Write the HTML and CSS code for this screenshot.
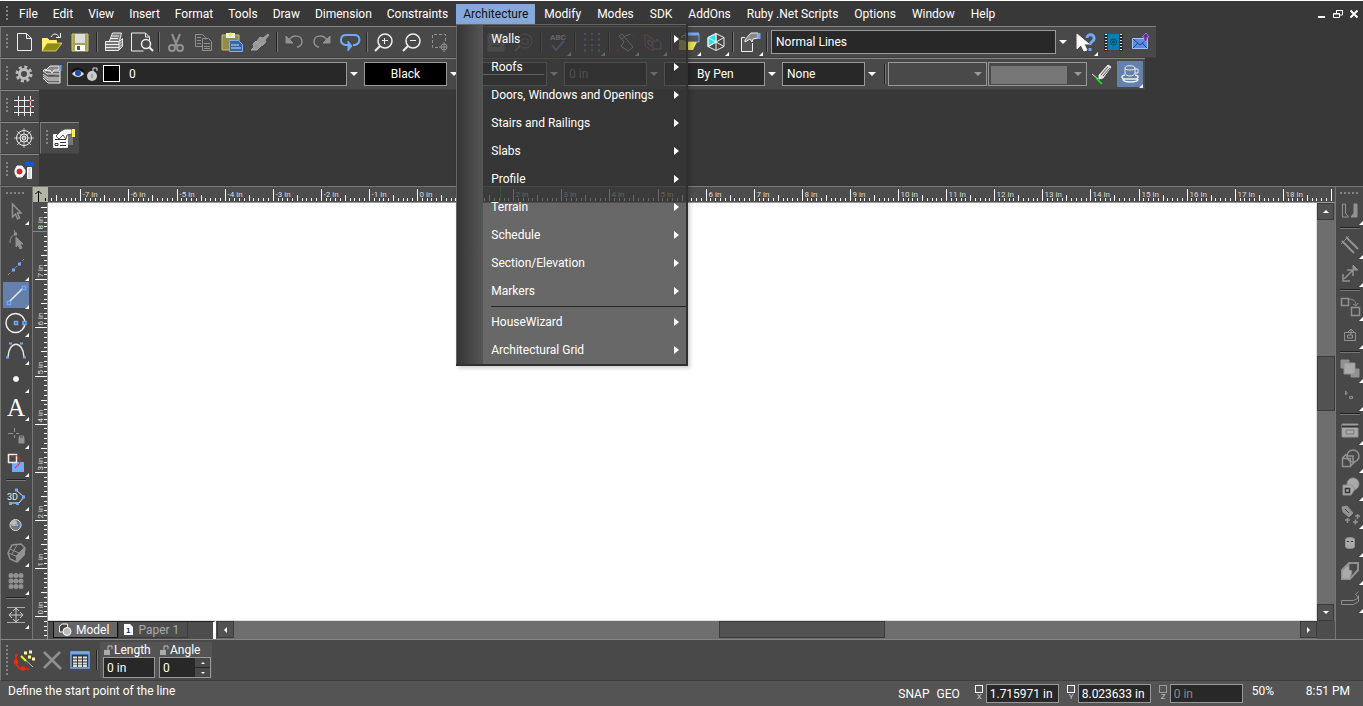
FILE: index.html
```
<!DOCTYPE html>
<html lang="en">
<head>
    <meta charset="UTF-8">
    <meta name="viewport" content="width=device-width, initial-scale=1.0">
    <title>CAD Drawing - Model</title>
    <link rel="stylesheet" href="styles.css">
</head>
<body>

    <!-- Menu bar -->
    <header class="menubar">
        <span class="grip"></span>
        <nav class="menus">
            <button>File</button>
            <button>Edit</button>
            <button>View</button>
            <button>Insert</button>
            <button>Format</button>
            <button>Tools</button>
            <button>Draw</button>
            <button>Dimension</button>
            <button>Constraints</button>
            <div class="menu-open">
                <button class="current" aria-expanded="true">Architecture</button>
                <div class="dropdown">
                    <button>Walls</button>
                    <button>Roofs</button>
                    <button>Doors, Windows and Openings</button>
                    <button>Stairs and Railings</button>
                    <button>Slabs</button>
                    <button>Profile</button>
                    <button>Terrain</button>
                    <button>Schedule</button>
                    <button>Section/Elevation</button>
                    <button>Markers</button>
                    <hr>
                    <button>HouseWizard</button>
                    <button>Architectural Grid</button>
                </div>
            </div>
            <button>Modify</button>
            <button>Modes</button>
            <button>SDK</button>
            <button>AddOns</button>
            <button>Ruby .Net Scripts</button>
            <button>Options</button>
            <button>Window</button>
            <button>Help</button>
        </nav>
        <div class="window-buttons">
            <button aria-label="Minimize"><svg width="10" height="10"><path d="M1 8h7" stroke="#fff" stroke-width="2"/></svg></button>
            <button aria-label="Restore"><svg width="10" height="10" fill="none" stroke="#fff"><path d="M3.500 4V1.500h6v4.500H7M3 1.500h7"/><path d="M.5 4.500h6v4h-6zM0 5h7"/></svg></button>
            <button aria-label="Close"><svg width="10" height="10"><path d="M1.500 1.500l7 7M8.500 1.500l-7 7" stroke="#fff" stroke-width="2"/></svg></button>
        </div>
    </header>

    <!-- Standard toolbar -->
    <div class="toolbar">
        <span class="grip"></span>
        <button class="tool" aria-label="New"><svg class="icon"><path d="M7.500 5.500h9l5 5v12h-14z"/><path d="M16.500 5.500v5h5"/></svg></button>
        <button class="tool" aria-label="Open"><svg class="icon"><path d="M4.500 22V10.500h5l2 2h7V15" fill="#ffee70" stroke="#ffee70"/><path d="M4 23l5-8h15l-6 8z" fill="#8c8c16" stroke="#f4ee70" stroke-width=".7"/><path d="M13 9c2-4 6-4 8 0M22.500 5v4.500H18"/></svg></button>
        <button class="tool" aria-label="Save"><svg class="icon"><path d="M6 6h16v17H6z" fill="#a5a355" stroke="#c9c877"/><path d="M9 6h10v9H9z" fill="#ddd" stroke="none"/><path d="M9 17h10v6H9z" fill="#fff" stroke="none"/><path d="M11 18h3v4h-3z" fill="#555" stroke="none"/></svg></button>
        <span class="sep"></span>
        <button class="tool" aria-label="Print"><svg class="icon"><path d="M9.500 13l3-8h9l-2 8M5.500 13.500h14l3-3v8l-4 4h-13z" fill="#777"/><path d="M12 8h7M11 10.500h7M6 16.500h13l3-3M6 19.500h13l3-3M19 14v8"/></svg></button>
        <button class="tool" aria-label="Print preview"><svg class="icon"><path d="M21.500 12v-3l-4-4h-14v18h12M17.500 5v4h4"/><circle cx="18" cy="16" r="4.500" stroke-width="1.500"/><path d="M21 19l4 4" stroke-width="2"/></svg></button>
        <span class="sep"></span>
        <button class="tool" aria-label="Cut"><svg class="icon dim"><path d="M10 6l5 12M18 6l-5 12" stroke-width="2"/><circle cx="10" cy="20" r="3" stroke-width="2"/><circle cx="18" cy="20" r="3" stroke-width="2"/></svg></button>
        <button class="tool" aria-label="Copy"><svg class="icon dim"><path d="M12 18.500H5.500v-12h7l3 3v2M7 9.500h4M7 12.500h4M7 15.500h4"/><path d="M12.500 10.500h6l3 3v9h-9zM14 15.500h6M14 18.500h6M14 20.500h6"/></svg></button>
        <button class="tool" aria-label="Paste"><svg class="icon"><path d="M4 7h17v15H4z" fill="#8f8c4c" stroke="#c8bd63"/><path d="M8 5h9v5H8z" fill="#eee" stroke="none"/><circle cx="12.500" cy="6.500" r="2" fill="#ee3" stroke="none"/><path d="M11.500 12.500h9l4 4v7h-13z" fill="#3b669f" stroke="#78adff"/><path d="M13 17h8M13 20h10" stroke="#bcdcff"/></svg></button>
        <button class="tool" aria-label="Format painter"><svg class="icon"><path d="M22 6l1 1-4 5 1 2-4 4-5-5 3-4 3 1z" fill="#999" stroke="#999"/><path d="M10 13l5 5-4 4H5l3-3-1-3z" fill="#999" stroke="#aaa"/></svg></button>
        <span class="sep"></span>
        <button class="tool" aria-label="Undo"><svg class="icon dim"><path d="M6 8v7h7z" fill="#919191"/><path d="M9 12c4-6 13-5 13 2 0 3-3 5-5 5" stroke-width="1.500"/></svg></button>
        <button class="tool" aria-label="Redo"><svg class="icon dim"><path d="M22 8v7h-7z" fill="#919191"/><path d="M19 12C15 6 6 7 6 14c0 3 3 5 5 5" stroke-width="1.500"/></svg></button>
        <button class="tool" aria-label="Repeat"><svg class="icon blue"><path d="M12 17H9c-6-2-5-10 1-10h8c7 0 7 8 1 10h-2" stroke-width="2"/><path d="M12 13l4 5-4 5z" fill="#72a8f8"/></svg></button>
        <span class="sep"></span>
        <button class="tool" aria-label="Zoom in"><svg class="icon"><circle cx="15" cy="13" r="7" stroke-width="1.500"/><path d="M10 18l-5 5" stroke-width="2"/><path d="M12 12.500h6M14.500 10v6"/></svg></button>
        <button class="tool" aria-label="Zoom out"><svg class="icon"><circle cx="15" cy="13" r="7" stroke-width="1.500"/><path d="M10 18l-5 5" stroke-width="2"/><path d="M12 12.500h6"/></svg></button>
        <button class="tool" aria-label="Zoom window"><svg class="icon dim"><path d="M19.500 13V6.500h-13v13h6" stroke-dasharray="3 2"/><circle cx="18" cy="19" r="3"/><path d="M18 14v10M13 19h8"/></svg></button>
        <span class="tool"></span>
        <button class="tool" aria-label="Zoom page"><svg class="icon dim"><path d="M6 6h16v17H6z" fill="#888"/><path d="M10 10h8M10 14h8M10 18h8" stroke="#333"/></svg></button>
        <button class="tool" aria-label="Zoom previous"><svg class="icon dim"><circle cx="15" cy="13" r="7"/><path d="M10 18l-5 5" stroke-width="2"/><path d="M12 11h6v5h-6z"/></svg></button>
        <span class="sep"></span>
        <button class="tool flyout" aria-label="Spelling"><svg class="icon"><text x="6" y="12" class="abc">ABC</text><path d="M8 17l4 5 8-9" stroke="#72a8f8" stroke-width="2"/></svg></button>
        <span class="sep"></span>
        <button class="tool flyout" aria-label="Grid"><svg class="icon blue"><path d="M6 6h17M6 11.500h17M6 17h17M6 22.500h17" stroke-width="2" stroke-dasharray="2 5"/></svg></button>
        <span class="sep"></span>
        <button class="tool flyout" aria-label="Select"><svg class="icon"><path d="M10 6l11 13-5 4-7-5 3-4-5-6z"/><path d="M10 11c3-4 7-4 9-5"/><path d="M5 22h2M21 7h2" stroke="#f33"/></svg></button>
        <button class="tool flyout" aria-label="Mirror"><svg class="icon"><path d="M5 6l8 5v12l-8-5z" stroke="#f55"/><path d="M8 12l4 2v4l-4-2zM13 13h4v-2l4 4v6h-8" stroke="#72a8f8"/></svg></button>
        <span class="sep"></span>
        <button class="tool flyout" aria-label="Import"><svg class="icon"><path d="M12 6h13v8H12z" fill="#555" stroke="#72a8f8"/><path d="M12 6h13" stroke="#72a8f8" stroke-width="3"/><path d="M5 22V12h5l2 2h11l-4 8z" fill="#e6dc5a" stroke="none"/><path d="M8 10V8l4-1M11 5l3 2-3 2"/></svg></button>
        <button class="tool flyout" aria-label="Render"><svg class="icon"><path d="M6 9.500l8-4v8.500l-8 5z" fill="#22e4f4"/><path d="M14 5.500l8 4v9l-8 4-8-4v-9zM14 5.500V22M6 9.500l16 9M22 9.500l-16 9"/></svg></button>
        <span class="sep"></span>
        <button class="tool flyout" aria-label="Properties"><svg class="icon"><path d="M9 9.500H5.500v14h11V15" fill="#555"/><path d="M9 12l4-5 2-2h7v5l-5 1-1 3-2-3-5 3z" fill="#888"/><path d="M23 5v6" stroke="#72a8f8" stroke-width="3"/></svg></button>
        <span class="sep"></span>
        <div class="combo wide"><select aria-label="Line style"><option>Normal Lines</option></select></div>
        <button class="tool flyout" aria-label="Context help"><svg class="icon"><path d="M6 6v15l4-4 3 6 3-1-3-6h5z" fill="#fff"/><path d="M16 10c0-5 8-4 7 1 0 3-4 2-4 6M19 20v3" stroke="#72a8f8" stroke-width="3"/></svg></button>
        <button class="tool" aria-label="Address book"><svg class="icon"><path d="M7 6h14v16H7z" fill="#087fae" stroke="none"/><path d="M7 6v17M22 6v17" stroke="#222" stroke-width="3"/><path d="M7 6v17M22 6v17" stroke="#ddd" stroke-width="2" stroke-dasharray="1 2"/><circle cx="14.500" cy="14" r="3" stroke="#034563"/><circle cx="14.500" cy="14" r="1" stroke="#034563"/></svg></button>
        <button class="tool" aria-label="Send mail"><svg class="icon"><path d="M5.500 10.500h15v10h-15z" fill="#5a8fe7" stroke="#9cc5ff"/><path d="M6 11l7 6 7-6M6 20l5-5M20 20l-5-5" stroke="#244679"/><path d="M17 13V9h-2l4-4 3 4h-2v4z" fill="#5d2aaf" stroke="#c9aff7" stroke-width=".5"/></svg></button>
    </div>

    <!-- Property toolbar -->
    <div class="toolbar">
        <span class="grip"></span>
        <button class="tool" aria-label="Settings"><svg class="icon"><circle cx="14" cy="14" r="4.500" stroke="#bbb" stroke-width="3"/><circle cx="14" cy="14" r="7" stroke="#bbb" stroke-width="3" stroke-dasharray="3 2.500"/></svg></button>
        <button class="tool" aria-label="Layers"><svg class="icon"><path d="M5 18l5 5h12V11H10L7 9l-2 2 4 3h13M5 14l5 4h12M5 16l5 4h12" fill="#666"/><path d="M7 11l5-5h9v4h-5l-2 3-2-3z" fill="#888"/><path d="M22.500 5v6" stroke="#72a8f8" stroke-width="2"/></svg></button>
        <div class="combo layer">
            <select aria-label="Layer"><option>0</option></select>
            <svg class="layer-marks" width="28" height="20" fill="none"><path d="M1 10c4-5 8-5 12 0-4 4-8 4-12 0z" fill="#ddd"/><circle cx="7" cy="9" r="3" fill="#1c4bb0"/><path d="M1 8c4-5 8-4 12 0" stroke="#111" stroke-width="2"/><circle cx="21" cy="12" r="5" fill="#ccc"/><path d="M22 8V4h4v3" stroke="#ddd"/><path d="M21 10v4" stroke="#777"/></svg>
            <span class="swatch"></span>
        </div>
        <div class="combo black"><select aria-label="Pen color"><option>Black</option></select></div>
        <div class="combo line"><select aria-label="Pen pattern"><option></option></select></div>
        <div class="combo off"><select aria-label="Pen width" disabled><option>0 in</option></select></div>
        <div class="combo pen"><select aria-label="Brush color"><option>By Pen</option></select></div>
        <div class="combo"><select aria-label="Brush pattern"><option>None</option></select></div>
        <span class="sep"></span>
        <div class="combo inset"><select aria-label="Hatch" disabled><option></option></select></div>
        <div class="combo inset filled"><select aria-label="Transparency" disabled><option></option></select></div>
        <button class="tool" aria-label="Pick style"><svg class="icon"><path d="M11 15l9-10 3 2-8 11-4 1z" fill="#ddd"/><path d="M13 15l7-8M15 16l7-8" stroke="#555"/><path d="M4 14l6 5" /><path d="M8 18l6 6" stroke="#0f0" stroke-width="1.500"/></svg></button>
        <button class="tool flyout active" aria-label="Brush"><svg class="icon"><path d="M9 8c0-3 10-3 10 0v5c-1 4-9 4-10 0zM9 8.500c1 2 9 2 10 0M19 9h3v4h-3"/><path d="M9 15c-5 1-3 4 0 4h10c3 0 5-3 0-4M7 19c0 4 15 4 15 0" stroke-width="1.500"/></svg></button>
    </div>

    <!-- Small docked toolbars -->
    <div class="toolbar small">
        <span class="grip"></span>
        <button class="tool" aria-label="Grid display"><svg class="icon"><path d="M8.500 4v20M14.500 4v20M20.500 4v20M4 8.500h20M4 14.500h20M4 20.500h20"/><path d="M19.500 8.500h2M19.500 14.500h2" stroke="#f33" stroke-width="2"/></svg></button>
    </div>
    <div class="toolbar-row">
        <div class="toolbar small">
            <span class="grip"></span>
            <button class="tool" aria-label="Compass"><svg class="icon"><path d="M14 4v20M4 14h20M7 7l14 14M21 7L7 21" stroke="#bbb"/><circle cx="14" cy="14" r="7.500"/><circle cx="14" cy="14" r="4"/><circle cx="14" cy="14" r="1.500" fill="#555"/></svg></button>
        </div>
        <div class="toolbar small">
            <span class="grip"></span>
            <button class="tool" aria-label="Object properties"><svg class="icon"><path d="M14 9h9v12h-9z" fill="#777" stroke="none"/><path d="M3.500 10.500h14v13h-14z" fill="#fff"/><path d="M5 19.500h3v2H5zM10 18.500h6M10 21.500h6M5 15.500h11" stroke="#333"/><path d="M6 12l5-5 4-2h7v5l-5 1-1 4-3-4-4 4z" fill="#fff" stroke="#555"/><path d="M23.500 5v8" stroke="#ffef55" stroke-width="3"/></svg></button>
        </div>
    </div>
    <div class="toolbar small">
        <span class="grip"></span>
        <button class="tool" aria-label="Hardware"><svg class="icon"><path d="M7 10h5l3 4v3l-3 4H7l-2-4v-3z" fill="#fff"/><circle cx="9.500" cy="15.500" r="2.500" fill="#e22" stroke="#a22"/><path d="M15 6h9v4h-9z" fill="#0a5be0" stroke="none"/><path d="M17.500 11.500h4v11h-4z" fill="#ddd" stroke="#fff"/></svg></button>
    </div>

    <!-- Drawing area -->
    <main class="work">
        <div class="sidebar">
            <span class="grip"></span>
            <button class="tool flyout" aria-label="Select"><svg class="icon dim"><path d="M10.500 7v13l3-3 2 5 2-1-2-5h3.500z" stroke-width="1.500"/></svg></button>
            <button class="tool" aria-label="Edit node"><svg class="icon dim"><path d="M14 12v10l2-2 2 4 2-1-2-4h3z" fill="#919191"/><path d="M8 18c0-5 2-8 6-9M14 9l-2-4"/><path d="M12 9h3" stroke-width="3"/></svg></button>
            <button class="tool flyout" aria-label="Construction line"><svg class="icon dim"><path d="M6 22l16-16" stroke-dasharray="3 2"/><path d="M10 17h3M16 11h3" stroke="#72a8f8" stroke-width="3"/></svg></button>
            <button class="tool flyout active" aria-label="Line"><svg class="icon"><path d="M7 21l14-14" stroke-width="1.500"/><path d="M5.500 20.500h3v3h-3zM20.500 5.500h3v3h-3z" stroke="#72a8f8" stroke-width="1.500" fill="#4166a0"/></svg></button>
            <button class="tool flyout" aria-label="Circle"><svg class="icon"><circle cx="13.500" cy="14" r="9.500" stroke-width="1.500"/><path d="M12.500 12.500h3v3h-3zM21 12.500h3v3h-3z" stroke="#72a8f8" stroke-width="1.500" fill="#2d4f85"/></svg></button>
            <button class="tool flyout" aria-label="Curve"><svg class="icon"><path d="M6 20c1-17 15-17 16 0" stroke-width="1.500"/><path d="M7 6.500h3M18 6.500h3M4 20.500h3M21 20.500h3" stroke="#72a8f8" stroke-width="2"/></svg></button>
            <button class="tool flyout" aria-label="Point"><svg class="icon"><circle cx="14" cy="14" r="2.500" fill="#fff"/></svg></button>
            <button class="tool flyout" aria-label="Text"><svg class="icon"><text x="14" y="23" class="big-a">A</text></svg></button>
            <button class="tool flyout" aria-label="Lock point"><svg class="icon dim"><path d="M6 12.500h5M14 12.500h3M12.500 7v4M12.500 14v3"/><path d="M18 18h3v3h-3z" fill="#919191" stroke-width="3"/><path d="M17.500 17v-2h4v2"/></svg></button>
            <button class="tool flyout" aria-label="Transform"><svg class="icon"><path d="M10 13h12v10H10z" fill="#72a8f8" stroke="none"/><path d="M6.500 5.500h8v8h-8z" stroke-width="1.500"/><path d="M9 8c9-5 13 5 4 11" stroke="#e22"/></svg></button>
            <span class="sep"></span>
            <button class="tool flyout" aria-label="3D objects"><svg class="icon"><text x="5" y="17" class="three-d">3D</text><path d="M14 7l8 7-5 6H9"/><path d="M13 7h3M20 14h3M7 20.500h3M14 20.500h3" stroke="#72a8f8" stroke-width="3"/></svg></button>
            <button class="tool flyout" aria-label="Sphere"><svg class="icon"><circle cx="13.500" cy="14" r="5.500" fill="#777" stroke="#ddd"/><circle cx="12" cy="12" r="3" fill="#bbb" stroke="none"/><path d="M13 14h3M18 14h2" stroke="#72a8f8" stroke-width="2"/></svg></button>
            <button class="tool flyout" aria-label="Solid"><svg class="icon dim"><path d="M6 14l4-8 9-1 4 4-1 7-7 7-7-3z" stroke-width="1.500"/><path d="M14 17l8-8v7l-7 7z" fill="#919191"/><path d="M6 14l8 3M10 15l5-9M14 17l8-8M8 10l9 4"/></svg></button>
            <button class="tool flyout" aria-label="Array"><svg class="icon dim"><path d="M9 8.500h11M9 14h11M9 19.500h11" class="dots"/></svg></button>
            <span class="sep"></span>
            <button class="tool flyout" aria-label="Pan"><svg class="icon"><path d="M5 6.500h18M5 21.500h18" stroke="#aaa"/><path d="M14 8v12M7 14h14M11 10l3-3 3 3M11 18l3 3 3-3M10 11l-3 3 3 3M18 11l3 3-3 3" stroke="#ccc"/></svg></button>
        </div>

        <div class="sheet">
            <button class="corner" aria-label="Origin"><svg width="14" height="14" fill="none" stroke="#000"><path d="M5.500 14V3M2.500 6l3-3 3 3M12.500 10v3"/></svg></button>
            <svg class="ruler-h" id="rulerH"></svg>
            <svg class="ruler-v" id="rulerV"></svg>
            <div class="canvas"></div>
            <div class="scroll-v">
                <button class="up" aria-label="Scroll up"></button>
                <span class="thumb"></span>
                <button class="down" aria-label="Scroll down"></button>
            </div>
            <div class="bottom">
                <div class="tabs">
                    <button class="tab on"><svg width="14" height="14" fill="#444" stroke="#fff"><path d="M1.500 3l3-2h5v6l-2 2h-6z"/><circle cx="9" cy="8.500" r="4" fill="#bbb"/></svg>Model</button>
                    <button class="tab"><svg width="11" height="13"><path d="M1 1h6l3 3v8H1z" fill="#fff"/><text x="3" y="10" class="page-no">1</text></svg>Paper 1</button>
                </div>
                <div class="scroll-h">
                    <button class="left" aria-label="Scroll left"></button>
                    <span class="thumb"></span>
                    <button class="right" aria-label="Scroll right"></button>
                </div>
            </div>
        </div>

        <div class="sidebar right-side">
            <span class="grip"></span>
            <button class="tool flyout" aria-label="Clip"><svg class="icon dim"><path d="M6.500 7v13h6l-3-4V7z"/><path d="M21 7v13h-6l3-4V7z" fill="#919191"/></svg></button>
            <span class="sep"></span>
            <button class="tool flyout" aria-label="Trim"><svg class="icon dim"><path d="M6 10l12 12M10 6l12 12" stroke-width="2"/><path d="M5 13L13 5"/></svg></button>
            <button class="tool flyout" aria-label="Stretch"><svg class="icon dim"><path d="M8 20l9-9M7 15v7h7M11 11h6v6" stroke-width="1.500"/><path d="M17 6l5 5h-5z" fill="#919191"/></svg></button>
            <span class="sep"></span>
            <button class="tool flyout" aria-label="Copy entity"><svg class="icon dim"><path d="M5.500 5.500h7v7h-7zM15.500 14.500h8v8h-8z" stroke-width="1.500"/><path d="M13 6c4 0 7 2 7 6M17 11l3 2 2-3"/></svg></button>
            <button class="tool flyout" aria-label="Group"><svg class="icon dim"><path d="M8.500 11.500h11v8h-11zM11.500 17v-3h5v3z"/><path d="M15 14V8M12 11l3-3 3 3"/></svg></button>
            <span class="sep"></span>
            <button class="tool flyout" aria-label="Order"><svg class="icon dim"><path d="M5 5h8v8H5zM15 14h8v8h-8z" fill="#919191"/><path d="M8 8h11v11H8z" fill="#aaa"/></svg></button>
            <button class="tool flyout" aria-label="Align"><svg class="icon dim"><path d="M9.500 8v4l2-2zM13.500 13.500h3v2h-3z"/></svg></button>
            <span class="sep"></span>
            <button class="tool flyout" aria-label="Dialog"><svg class="icon dim"><path d="M6 7h16v13H6z" fill="#aaa"/><path d="M6 9.500h17" stroke="#333" stroke-width="2"/><path d="M10 13h8v4h-8z" stroke="#777"/></svg></button>
            <button class="tool flyout" aria-label="Intersect"><svg class="icon dim"><path d="M6.500 13.500h8v8h-8zM6.500 13l4-4M14.500 21l4-4M10 11h7v7" stroke-width="1.500"/><circle cx="17" cy="11" r="6" stroke-width="1.500"/></svg></button>
            <button class="tool flyout" aria-label="Subtract"><svg class="icon dim"><circle cx="17" cy="11" r="6" fill="#aaa"/><path d="M7 12h9l3 4-4 6H7z" fill="#aaa"/><path d="M9.500 15.500h4v4h-4z" stroke="#333" stroke-width="1.500"/></svg></button>
            <button class="tool flyout" aria-label="Explode"><svg class="icon dim"><path d="M6 6l5-1 6 7-4 4-6-5z" fill="#919191"/><path d="M9 8l4 4" stroke="#444"/><path d="M17 21h5M19.500 18.500v5M9 19h5M11.500 17v5M19 15h5M21.500 13v5" stroke-width="1.500"/></svg></button>
            <button class="tool flyout" aria-label="Cylinder"><svg class="icon dim"><path d="M9.500 10c1-2 8-2 9 0v8c-1 2-8 2-9 0z" fill="#aaa"/><path d="M11 12.500h2M15 12.500h2" stroke="#333"/></svg></button>
            <button class="tool flyout" aria-label="Shell"><svg class="icon dim"><path d="M6 13l7-7h9v7l-8 9H6z" stroke-width="2"/><path d="M6 14l7-7v6l3 1-2 8H6z" fill="#aaa"/></svg></button>
            <button class="tool flyout" aria-label="Bend"><svg class="icon dim"><path d="M5.500 15.500h12l4-2v-2l-2-2 3-3M5.500 19.500h12l5-3v-6M5.500 15.500v4"/></svg></button>
        </div>
    </main>

    <!-- Inspector bar -->
    <div class="inspector">
        <span class="grip"></span>
        <button class="tool" aria-label="Snap wizard"><svg class="icon"><path d="M8 9H6v9l4 5h9" stroke="#f21" stroke-width="1.500"/><path d="M4 16h4M11 22.500h4" stroke="#f21" stroke-width="4"/><path d="M11 10l12 11" stroke="#bbb"/><path d="M11 10l5 5" stroke="#ee2" stroke-width="2"/><path d="M14 7h3M19 6h3M18 11h3M22 13h3" stroke="#fff5a0" stroke-width="3"/></svg></button>
        <button class="tool" aria-label="Cancel"><svg class="icon dim"><path d="M6 6l17 17M22 6L6 22" stroke-width="2.500"/></svg></button>
        <button class="tool" aria-label="Table"><svg class="icon"><path d="M5 6h18v16H5z" fill="#333" stroke="#72a8f8" stroke-width="1.500"/><path d="M5 7h18" stroke="#72a8f8" stroke-width="3"/><path d="M7 11.500h14M7 14.500h14M7 17.500h14M7 20h14" stroke="#ddd" stroke-width="2" stroke-dasharray="4 1"/></svg></button>
        <span class="sep"></span>
        <div class="fields">
            <div class="field">
                <label for="length"><svg width="10" height="10"><path d="M0 5h6v5H0z" fill="#aaa"/><path d="M4 5V1h4v3" fill="none" stroke="#bbb"/></svg>Length</label>
                <input type="text" id="length" value="0 in">
            </div>
            <div class="field">
                <label for="angle"><svg width="10" height="10"><path d="M0 5h6v5H0z" fill="#aaa"/><path d="M4 5V1h4v3" fill="none" stroke="#bbb"/></svg>Angle</label>
                <div class="spin">
                    <input type="text" id="angle" value="0">
                    <button class="up" aria-label="Increase angle"></button>
                    <button class="down" aria-label="Decrease angle"></button>
                </div>
            </div>
        </div>
    </div>

    <!-- Status bar -->
    <footer class="status">
        <span class="prompt">Define the start point of the line</span>
        <button>SNAP</button>
        <button>GEO</button>
        <div class="coord">
            <label><input type="checkbox">X</label>
            <input type="text" aria-label="X coordinate" value="1.715971 in">
        </div>
        <div class="coord">
            <label><input type="checkbox">Y</label>
            <input type="text" aria-label="Y coordinate" value="8.023633 in">
        </div>
        <div class="coord off">
            <label><input type="checkbox" disabled>Z</label>
            <input type="text" aria-label="Z coordinate" value="0 in" disabled>
        </div>
        <span class="zoom">50%</span>
        <span class="clock">8:51 PM</span>
    </footer>

    <script src="script.js"></script>
</body>
</html>
```

FILE: styles.css
```
* {
    box-sizing: border-box;
}

body {
    font-family: Roboto, "Open Sans", sans-serif;
    font-size: 12px;
    line-height: 16px;
    color: #fff;
    background: #383838;
    margin: 0;
    min-height: 100vh;
    display: flex;
    flex-direction: column;
    border-top: 1px solid #fff;
}

button,
input,
select {
    font: inherit;
    color: inherit;
    margin: 0;
    border: none;
    border-radius: 0;
    background: none;
    padding: 0;
}

button {
    display: flex;
    align-items: center;
}

/* Menu bar */
.menubar {
    display: flex;
    align-items: center;
    height: 25px;
    padding-left: 4px;
}

.grip {
    flex: none;
    width: 2px;
    height: 16px;
    margin: 0 2px;
    background: repeating-linear-gradient(#858585 0 2px, transparent 2px 4px);
}

.menus {
    display: flex;
    flex: 1;
    padding-left: 2px;
}

.menus button {
    height: 20px;
    padding: 0 7px;
    white-space: nowrap;
}

.menus > button {
    margin-right: 1px;
}

.menu-open {
    position: relative;
}

.menu-open,
.menu-open ~ button {
    margin-right: 2px;
}

.menus .current {
    background: #86a9dc;
    color: #111;
}

.dropdown {
    position: absolute;
    top: 20px;
    left: 0;
    z-index: 10;
    width: 232px;
    padding: 1px 0 0 27px;
    border: solid #303030;
    border-width: 0 2px 2px 0;
    background: linear-gradient(90deg, #343434, #555) 0 0 / 27px 100% no-repeat, linear-gradient(rgba(53, 53, 53, 0.75), rgba(53, 53, 53, 0.75)) 27px 0 no-repeat;
    box-shadow: inset 1px 1px #666, 2px 2px 4px rgba(0, 0, 0, 0.2);
}

.dropdown button {
    width: 100%;
    height: 28px;
    padding: 0 7px 0 8px;
    justify-content: space-between;
}

.dropdown button::after {
    content: "";
    border: 4px solid transparent;
    border-left: 5px solid #fff;
    border-right: none;
}

.dropdown hr {
    margin: 1px 0 1px 8px;
    border: none;
    border-top: 1px solid #262626;
}

.window-buttons {
    display: flex;
    gap: 6px;
    padding-right: 4px;
}

/* Toolbars */
.toolbar {
    display: flex;
    align-items: center;
    align-self: flex-start;
    height: 32px;
    padding: 0 1px 0 3px;
    border-top: 1px solid #858585;
    border-left: 1px solid #777;
    border-bottom: 1px solid #3f3f3f;
    background: #494949;
}

.toolbar-row {
    display: flex;
    gap: 1px;
}

.tool {
    position: relative;
    flex: none;
    width: 28px;
    height: 28px;
}

.icon {
    width: 28px;
    height: 28px;
    fill: none;
    stroke: #eee;
}

.icon.dim {
    stroke: #919191;
}

.icon.blue {
    stroke: #72a8f8;
}

.icon text {
    fill: #eee;
    stroke: none;
}

.abc {
    font-size: 8px;
    font-weight: bold;
}

.icon .big-a {
    font: 25px "Liberation Serif", serif;
    text-anchor: middle;
    fill: #fff;
}

.three-d {
    font-size: 9px;
}

.dots {
    stroke-width: 5px;
    stroke-linecap: round;
    stroke-dasharray: 0 5;
}

.flyout::after {
    content: "";
    position: absolute;
    right: 1px;
    bottom: 0;
    border: solid transparent;
    border-width: 4px 0 0 4px;
    border-bottom: 4px solid #fff;
    border-top: none;
}

.active {
    background: #6480ab;
    background-clip: content-box;
    padding: 1px;
}

.active .icon {
    margin: -1px;
}

.sep {
    flex: none;
    width: 6px;
    height: 20px;
    border-left: 2px solid transparent;
    background: linear-gradient(90deg, #222 0 1px, #777 1px 2px) no-repeat 0 0 / 2px 100%;
}

.combo {
    position: relative;
    flex: none;
    width: 100px;
    padding-right: 17px;
}

.combo::after {
    content: "";
    position: absolute;
    right: 6px;
    top: 10px;
    border: 4px solid transparent;
    border-top-color: #fff;
    border-bottom: none;
}

.combo select {
    display: block;
    appearance: none;
    width: 100%;
    height: 24px;
    padding: 0 4px;
    border: 1px solid #999;
    background: #282828;
    color: #fff;
    opacity: 1;
}

.combo.wide {
    width: 301px;
    padding-left: 1px;
    padding-right: 15px;
}

.combo.wide::after {
    right: 4px;
}

.combo.layer {
    width: 298px;
    padding-left: 1px;
}

.combo.layer select {
    padding-left: 61px;
}

.layer-marks {
    position: absolute;
    left: 5px;
    top: 2px;
}

.swatch {
    position: absolute;
    left: 37px;
    top: 3px;
    width: 17px;
    height: 17px;
    border: 1px solid #fff;
    background: #000;
}

.combo.black select {
    background: #000;
    text-align: center;
    text-align-last: center;
}

.combo.line select {
    background: linear-gradient(#ddd, #ddd) center / 76px 1px no-repeat #282828;
}

.combo.off select {
    color: #999;
}

.combo.pen {
    width: 118px;
}

.combo.pen select {
    padding-left: 32px;
}

.combo.inset {
    padding-right: 1px;
}

.combo.inset select {
    background: #494949;
}

.combo.inset.filled select {
    background: linear-gradient(#777, #777) 2px 3px / 76px 18px no-repeat #494949;
}

.combo.inset::after {
    border-top-color: #999;
}

/* Drawing area */
.work {
    flex: 1;
    display: flex;
    border-bottom: 1px solid #858585;
}

.sidebar {
    display: flex;
    flex-direction: column;
    align-items: center;
    width: 33px;
    padding-right: 1px;
    border: 1px solid #777;
    border-width: 1px 1px 0 1px;
    background: #484848;
}

.sidebar .grip {
    width: 20px;
    height: 2px;
    margin: 5px 0 3px;
    background: repeating-linear-gradient(90deg, #858585 0 2px, transparent 2px 4px);
}

.sidebar .sep {
    width: 20px;
    height: 6px;
    border: none;
    background: linear-gradient(#222 0 1px, #777 1px 2px) no-repeat 0 2px / 100% 2px;
}

.sidebar.right-side {
    width: 28px;
    padding-right: 0;
    border-right: none;
}

.sheet {
    flex: 1;
    min-width: 0;
    display: grid;
    grid-template-columns: 15px 1fr 18px;
    grid-template-rows: 16px 1fr 18px;
    border-top: 1px solid #777;
    background: #4d4d4d;
}

.corner {
    background: #b4b4a4;
    height: 15px;
}

.ruler-h {
    grid-column: 2 / 4;
    width: 100%;
    height: 16px;
    border-bottom: 1px solid #999;
}

.ruler-v {
    grid-row: 2 / 4;
    grid-column: 1;
    width: 15px;
    height: 100%;
    border-right: 1px solid #999;
}

.ruler-h path,
.ruler-v path {
    stroke: #fff;
    shape-rendering: crispEdges;
}

.ruler-h path.pointer,
.ruler-v path.pointer {
    stroke: #2fc52f;
}

.ruler-h text,
.ruler-v text {
    font: 8px Roboto, "Open Sans", sans-serif;
    fill: #ddd;
}

.canvas {
    grid-row: 2;
    grid-column: 2;
    background: #fff;
    border: solid #ddd;
    border-width: 0 1px 1px 0;
}

.scroll-v {
    grid-row: 2;
    grid-column: 3;
    display: flex;
    flex-direction: column;
    background: #6e6e6e;
}

.scroll-v button,
.scroll-h button,
.thumb {
    flex: none;
    background: #525252;
    border: 1px solid #3b3b3b;
    justify-content: center;
}

.scroll-v button,
.scroll-h button {
    width: 17px;
    height: 17px;
}

.scroll-v .thumb {
    height: 55px;
    margin-top: auto;
}

.scroll-v .down {
    margin-top: 193px;
}

.up::after,
.down::after,
.left::after,
.right::after {
    content: "";
    border: 3px solid transparent;
}

.up::after {
    border-bottom-color: #fff;
    border-top: none;
}

.down::after {
    border-top-color: #fff;
    border-bottom: none;
}

.left::after {
    border-right-color: #fff;
    border-left: none;
}

.right::after {
    border-left-color: #fff;
    border-right: none;
}

.bottom {
    grid-row: 3;
    grid-column: 2 / 4;
    display: flex;
    padding-right: 18px;
}

.tabs {
    display: flex;
    width: 168px;
    padding-left: 5px;
    border-right: 3px solid #fff;
    border-top: 1px solid #222;
}

.tab {
    height: 16px;
    gap: 4px;
    padding: 0 8px 0 4px;
    color: #aaa;
    border: 1px solid #3b3b3b;
    border-top: none;
}

.tab.on {
    background: #666;
    color: #fff;
    border-color: #111;
}

.page-no {
    font: bold 8px "Liberation Sans", sans-serif;
    fill: #228;
}

.scroll-h {
    flex: 1;
    display: flex;
    margin-left: 1px;
    background: #6e6e6e;
}

.scroll-h .thumb {
    width: 166px;
    height: 17px;
    margin: 0 auto 0 485px;
}

/* Inspector */
.inspector {
    display: flex;
    align-items: center;
    height: 41px;
    padding-left: 3px;
    background: #494949;
    border-left: 1px solid #777;
    border-bottom: 1px solid #3d3d3d;
}

.inspector .grip {
    height: 30px;
}

.fields {
    display: flex;
    gap: 4px;
    height: 36px;
    padding: 0 1px 0 3px;
    background: #545454;
}

.field {
    width: 52px;
}

.field label {
    display: flex;
    align-items: center;
    height: 15px;
    padding-left: 1px;
}

.field input,
.coord input[type="text"] {
    display: block;
    width: 100%;
    height: 21px;
    padding: 0 3px;
    border: 1px solid #999;
    background: #282828;
}

.spin {
    position: relative;
}

.spin button {
    position: absolute;
    right: 1px;
    width: 15px;
    height: 9px;
    justify-content: center;
    background: #494949;
}

.spin .up {
    top: 1px;
}

.spin .down {
    bottom: 1px;
}

.spin button::after {
    border-width: 2px;
}

/* Status bar */
.status {
    display: flex;
    align-items: center;
    height: 25px;
    padding: 0 13px 0 8px;
    background: #545454;
}

.status .prompt {
    flex: 1;
    padding-bottom: 5px;
}

.status button {
    margin-right: 7px;
}

.coord {
    display: flex;
    align-items: center;
    margin-left: 8px;
}

.coord label {
    position: relative;
    width: 11px;
    height: 19px;
    padding-left: 2px;
    font-size: 8px;
    line-height: 26px;
    color: #ccc;
}

.coord input[type="checkbox"] {
    position: absolute;
    left: 0;
    top: 1px;
    appearance: none;
    width: 8px;
    height: 8px;
    border: 1px solid #fff;
}

.coord input[type="text"] {
    width: 73px;
    height: 19px;
}

.coord.off input[type="text"] {
    color: #888;
}

.coord.off input[type="checkbox"] {
    border-color: #999;
}

.zoom {
    padding-bottom: 5px;
    margin-left: 9px;
}

.clock {
    padding-bottom: 5px;
    width: 76px;
    text-align: right;
}
```

FILE: script.js
```
// Rulers: tenths of an inch, labelled every inch
const INCH = 48.1;
const LABEL_WIDTH = 20;
const SVG = "http://www.w3.org/2000/svg";

function add(parent, name, attrs, text) {
    const el = document.createElementNS(SVG, name);
    for (const key in attrs) el.setAttribute(key, attrs[key]);
    if (text) el.textContent = text;
    parent.appendChild(el);
}

function tickSize(i) {
    if (i % 10 === 0) return 12;
    return i % 5 === 0 ? 6 : 3;
}

function drawHorizontal(svg, zero, pointer) {
    const width = svg.clientWidth;
    svg.innerHTML = "";
    let d = "";
    for (let i = Math.ceil(-zero * 10 / INCH); zero + i * INCH / 10 < width; i++) {
        const x = Math.round(zero + i * INCH / 10) + 0.5;
        d += `M${x} 14v-${tickSize(i)}`;
        if (i % 10 === 0 && x + LABEL_WIDTH < width) {
            add(svg, "text", { x: x + 2, y: 10 }, i / 10 + " in");
        }
    }
    add(svg, "path", { d: d });
    add(svg, "path", { d: `M${pointer} 0v14`, class: "pointer" });
}

function drawVertical(svg, zero, pointer) {
    const height = svg.clientHeight;
    svg.innerHTML = "";
    let d = "";
    for (let i = Math.ceil((zero - height) * 10 / INCH); zero - i * INCH / 10 > 0; i++) {
        const y = Math.round(zero - i * INCH / 10) + 0.5;
        d += `M14 ${y}h-${tickSize(i)}`;
        if (i % 10 === 0) add(svg, "text", { transform: `translate(10 ${y - 2}) rotate(-90)` }, i / 10 + " in");
    }
    add(svg, "path", { d: d });
    add(svg, "path", { d: `M0 ${pointer}h14`, class: "pointer" });
}

function drawRulers() {
    drawHorizontal(document.getElementById("rulerH"), 369, 452.5);
    drawVertical(document.getElementById("rulerV"), 413, 28.5);
}

drawRulers();
window.addEventListener("resize", drawRulers);
```
